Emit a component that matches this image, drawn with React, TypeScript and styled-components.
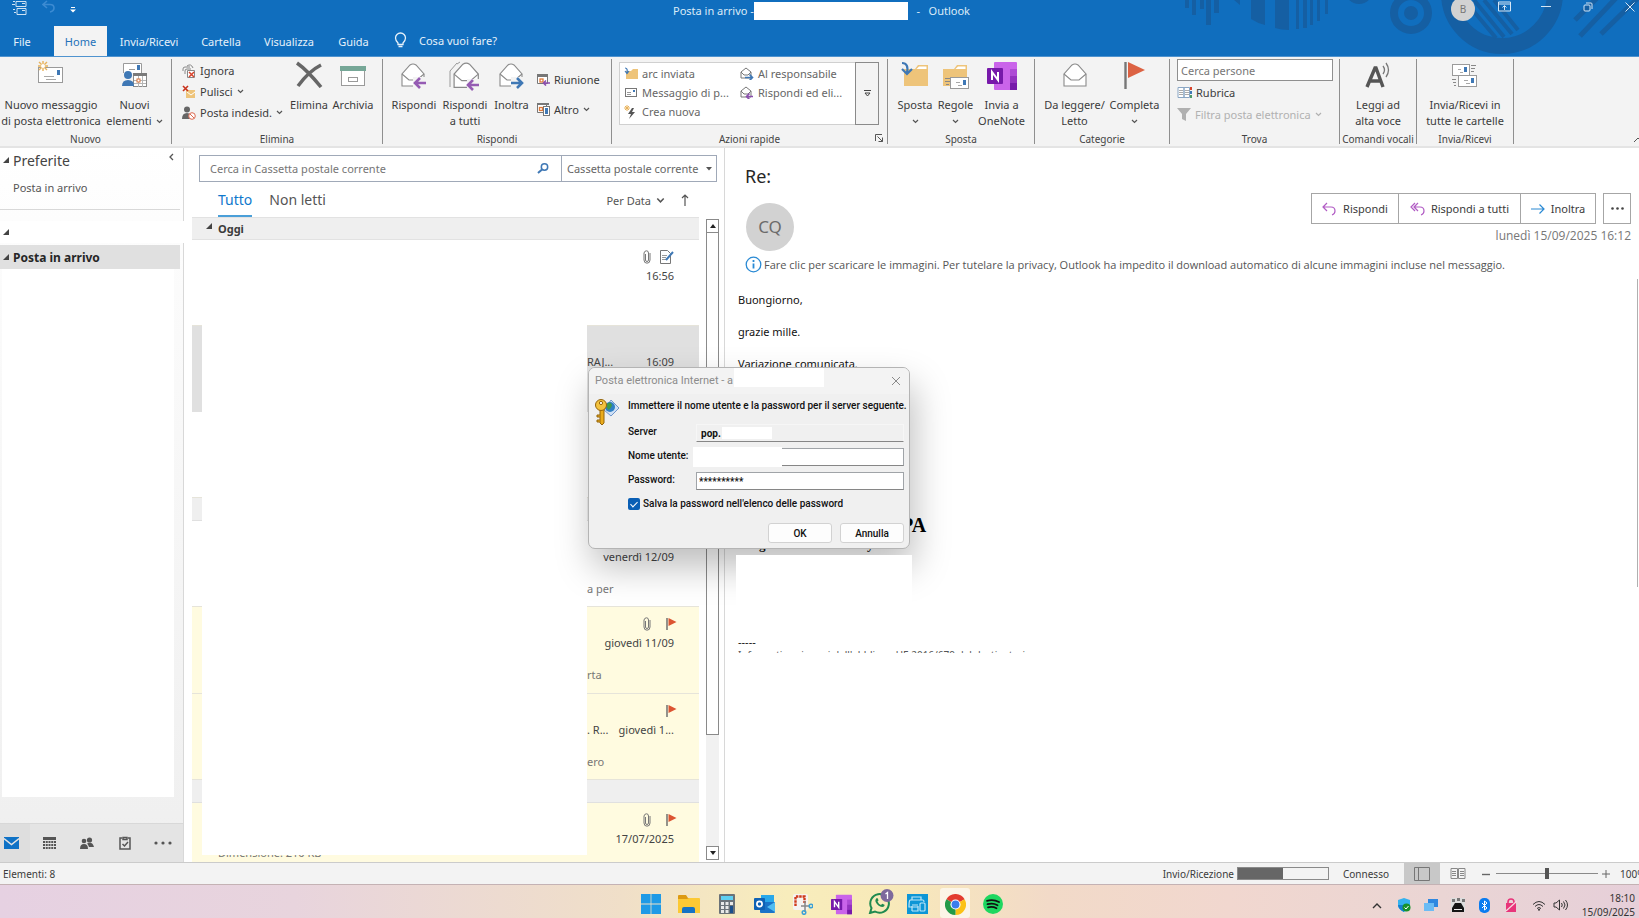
import React from "react";
import styled, { createGlobalStyle } from "styled-components";

const Global = createGlobalStyle`
  * { box-sizing: border-box; }
  body { margin: 0; overflow: hidden; background: #fff; }
  body, button, input, select { font-family: "Noto Sans", "Open Sans", sans-serif; font-size: 11px; color: #3b3b3b; }
  button { border: 0; background: none; padding: 0; white-space: nowrap; }
  h1, h2, p { margin: 0; font-weight: 400; }
  svg { display: block; flex: none; }
`;

const Shell = styled.div`
  position: relative;
  min-height: 100vh;
  display: flex;
  flex-direction: column;
  overflow: hidden;
  line-height: 16px;
`;

/* ---------- header ---------- */
const Header = styled.header`
  position: relative;
  background: #106ebe;
  height: 57px;
  border-bottom: 1px solid #4f93cf;
  overflow: hidden;
  display: flex;
  flex-direction: column;
  flex: none;
`;
const Pattern = styled.svg`
  position: absolute;
  top: 0;
  right: 0;
`;
const TitleBar = styled.div`
  position: relative;
  display: grid;
  grid-template-columns: 1fr auto 1fr;
  height: 27px;
`;
const Quick = styled.div`
  display: flex;
  gap: 14px;
  padding-left: 12px;
`;
const Title = styled.h1`
  display: flex;
  align-items: center;
  font-size: 11px;
  color: #dcebf8;
  height: 21px;
  padding-left: 4px;
  white-space: pre;
`;
const Redacted = styled.span<{ $w: number; $h: number }>`
  background: #fff;
  width: ${p => p.$w}px;
  height: ${p => p.$h}px;
  flex: none;
`;
const WindowTools = styled.div`
  display: flex;
  justify-content: flex-end;
  align-items: flex-start;
`;
const Account = styled.button`
  width: 24px;
  height: 24px;
  margin: -3px 8px 0 0;
  border-radius: 50%;
  background: #d2d2d2;
  color: #767676;
  font-size: 10px;
`;
const WinButton = styled.button`
  width: 42px;
  height: 13px;
  display: flex;
  align-items: center;
  justify-content: center;
  &:last-child { width: 30px; padding-left: 12px; }
`;
const Tabs = styled.nav`
  position: relative;
  display: flex;
  height: 30px;
`;
const Tab = styled.button<{ $w: number; $active?: boolean }>`
  width: ${p => p.$w}px;
  height: 30px;
  margin-left: ${p => (p.$active ? 10 : 0)}px;
  color: ${p => (p.$active ? "#2372ba" : "#e6f1fa")};
  background: ${p => (p.$active ? "#f3f3f3" : "transparent")};
`;
const Tell = styled.button`
  display: flex;
  align-items: center;
  gap: 12px;
  margin-left: 14px;
  height: 28px;
  color: #e6f1fa;
`;

/* ---------- ribbon ---------- */
const Ribbon = styled.div`
  display: flex;
  flex: none;
  height: 91px;
  background: #f3f3f3;
  border-bottom: 2px solid #e4e4e4;
  padding-top: 2px;
`;
const Group = styled.section<{ $w: number }>`
  position: relative;
  width: ${p => p.$w}px;
  flex: none;
  height: 85px;
  border-right: 1px solid #8f8f8f;
  display: flex;
  flex-direction: column;
`;
const GroupBody = styled.div<{ $pad?: number }>`
  display: flex;
  height: 73px;
  flex: none;
  padding-left: ${p => p.$pad ?? 0}px;
`;
const GroupTitle = styled.h2`
  font-size: 10px;
  line-height: 14px;
  text-align: center;
  color: #444;
  white-space: nowrap;
`;
const BigButton = styled.button<{ $w: number }>`
  width: ${p => p.$w}px;
  display: flex;
  flex-direction: column;
  align-items: center;
  line-height: 16px;
  flex: none;
`;
const BigIcon = styled.span`
  height: 38px;
  display: flex;
  align-items: flex-start;
  padding-top: 2px;
`;
const Line = styled.span`
  display: flex;
  align-items: center;
  gap: 4px;
  height: 16px;
  white-space: nowrap;
`;
const SmallColumn = styled.div<{ $w: number; $row: number; $top?: number; $left?: number }>`
  width: ${p => p.$w}px;
  padding-top: ${p => p.$top ?? 0}px;
  margin-left: ${p => p.$left ?? 0}px;
  display: grid;
  align-content: start;
  grid-auto-rows: ${p => p.$row}px;
  flex: none;
`;
const SmallButton = styled.button<{ $off?: boolean }>`
  display: flex;
  align-items: center;
  gap: 4px;
  color: ${p => (p.$off ? "#b1b1b1" : "#3b3b3b")};
`;
const Gallery = styled.div`
  display: flex;
  width: 260px;
  height: 63px;
  margin-top: 3px;
  background: #fff;
  border: 1px solid #d0d0d0;
`;
const GalleryItems = styled.div`
  flex: 1;
  display: grid;
  grid-template-columns: 116px 1fr;
  grid-auto-rows: 19px;
  align-content: start;
  padding: 1px 0 0 4px;
  button { color: #666; }
`;
const GalleryMore = styled.button`
  width: 24px;
  margin: -1px;
  border: 1px solid #8a8a8a;
  background: #f3f3f3;
  display: flex;
  align-items: center;
  justify-content: center;
`;
const Launcher = styled.button`
  position: absolute;
  right: 4px;
  bottom: 2px;
`;
const PeopleInput = styled.input`
  width: 156px;
  height: 22px;
  border: 1px solid #8f8f8f;
  background: #fff;
  padding: 0 3px;
  &::placeholder { color: #767676; opacity: 1; }
`;
const CollapseRibbon = styled.button`
  margin-left: auto;
  align-self: flex-end;
  width: 6px;
  height: 12px;
  overflow: hidden;
`;

/* ---------- main ---------- */
const Main = styled.main`
  flex: 1;
  display: flex;
  min-height: 0;
  background: #fff;
`;
const Nav = styled.aside`
  width: 184px;
  flex: none;
  display: flex;
  flex-direction: column;
  border-right: 1px solid #d8d8d8;
  background: linear-gradient(#fff, #fbfbfb 20%, #efefef);
`;
const NavRow = styled.button<{ $h: number; $size?: number; $selected?: boolean }>`
  height: ${p => p.$h}px;
  display: flex;
  align-items: center;
  gap: 4px;
  padding-left: 3px;
  width: 180px;
  font-size: ${p => p.$size ?? 11}px;
  font-weight: ${p => (p.$selected ? 700 : 400)};
  background: ${p => (p.$selected ? "#e0e0e0" : "transparent")};
  color: ${p => (p.$selected ? "#262626" : "#444")};
  svg:last-child:not(:first-child) { margin: -6px 6px 0 auto; }
`;
const NavChild = styled.a`
  height: 37px;
  padding: 8px 0 0 13px;
  color: #555;
  text-decoration: none;
`;
const NavDivider = styled.hr`
  width: 180px;
  height: 1px;
  border: 0;
  margin: 0 0 11px;
  background: #d8d8d8;
`;
const NavAccount = styled.div`
  background: #fff;
  margin: 0 -1px 2px 0;
  display: flex;
`;
const NavBlank = styled.div`
  background: #fff;
  margin: 0 9px 0 2px;
  flex: 1;
`;
const NavBar = styled.div`
  height: 39px;
  margin-top: 26px;
  border-top: 1px solid #d8d8d8;
  background: #e4e4e4;
  display: flex;
`;
const NavIcon = styled.button<{ $active?: boolean }>`
  width: 38px;
  display: flex;
  align-items: center;
  justify-content: center;
  background: ${p => (p.$active ? "#dedede" : "transparent")};
  &:first-child { width: 30px; padding-right: 7px; }
`;

const List = styled.section`
  width: 541px;
  flex: none;
  display: flex;
  flex-direction: column;
  border-right: 1px solid #d8d8d8;
  padding-left: 8px;
`;
const SearchRow = styled.div`
  display: flex;
  height: 27px;
  width: 518px;
  margin: 7px 0 0 7px;
  border: 1px solid #a0a9b8;
  flex: none;
`;
const SearchInput = styled.input`
  flex: 1;
  border: 0;
  padding: 0 10px;
  &::placeholder { color: #767676; opacity: 1; }
`;
const SearchButton = styled.button`
  width: 36px;
  display: flex;
  align-items: center;
  justify-content: center;
`;
const Scope = styled.div`
  position: relative;
  width: 155px;
  border-left: 1px solid #a0a9b8;
  display: flex;
  align-items: center;
  svg { position: absolute; right: 4px; pointer-events: none; }
`;
const ScopeSelect = styled.select`
  appearance: none;
  border: 0;
  background: none;
  width: 100%;
  padding: 0 0 0 5px;
  color: #666;
`;
const FilterRow = styled.div`
  display: flex;
  height: 35px;
  padding-left: 26px;
  flex: none;
`;
const Filter = styled.button<{ $active?: boolean }>`
  font-size: 14px;
  line-height: 31px;
  padding-top: 2px;
  margin-right: 17px;
  color: ${p => (p.$active ? "#0f78cc" : "#555")};
  border-bottom: 2px solid ${p => (p.$active ? "#4a9fd8" : "transparent")};
`;
const Sort = styled.button`
  display: flex;
  align-items: center;
  gap: 5px;
  margin: 2px 16px 0 auto;
  color: #555;
`;
const SortDir = styled.button`
  margin-right: 35px;
`;
const Scroller = styled.div`
  flex: 1;
  min-height: 0;
  display: flex;
`;
const Rows = styled.div`
  width: 507px;
  overflow: hidden;
`;
const DateHeader = styled.button`
  width: 100%;
  display: flex;
  align-items: center;
  gap: 6px;
  height: 23px;
  padding-left: 14px;
  background: #efefef;
  border-top: 1px solid #e2e2e2;
  border-bottom: 1px solid #e2e2e2;
  font-weight: 700;
  svg { margin-top: -5px; }
`;
const tones = { plain: "#fff", selected: "#e0e0e0", flagged: "#fffbe0", header: "#efefef" };
const Row = styled.article<{ $h: number; $tone: keyof typeof tones }>`
  display: flex;
  height: ${p => p.$h}px;
  padding-left: 10px;
  background: ${p => tones[p.$tone]};
  border-bottom: 1px solid ${p => (p.$tone === "plain" || p.$tone === "flagged" ? "#e6e4da" : "#e0e0e0")};
`;
const Cover = styled.div`
  width: 385px;
  margin-bottom: -1px;
  background: #fff;
  flex: none;
`;
const Meta = styled.div`
  flex: 1;
  min-width: 0;
  overflow: hidden;
  padding: 10px 25px 0 0;
  color: #444;
`;
const MetaIcons = styled.div<{ $flag?: boolean }>`
  display: flex;
  justify-content: flex-end;
  align-items: center;
  gap: ${p => (p.$flag ? 15 : 8)}px;
  height: 14px;
  margin: 0 ${p => (p.$flag ? -3 : 0)}px 4px 0;
`;
const MetaLine = styled.div`
  display: flex;
  justify-content: space-between;
  white-space: pre;
`;
const Preview = styled.div`
  color: #777;
  margin-top: 16px;
  white-space: nowrap;
`;
const LastRow = styled.article`
  display: flex;
  height: 59px;
  padding-left: 10px;
  background: ${tones.flagged};
`;
const LastCover = styled.div`
  width: 385px;
  flex: none;
  display: flex;
  flex-direction: column;
`;
const LastBlank = styled.div`
  height: 52px;
  background: #fff;
`;
const Cropped = styled.div`
  height: 4px;
  overflow: hidden;
  padding-left: 16px;
  color: #777;
  display: flex;
  align-items: flex-end;
  line-height: 12px;
`;
const Scrollbar = styled.div`
  width: 13px;
  margin: 2px 0 2px 7px;
  background: #f1f1f1;
  display: flex;
  flex-direction: column;
`;
const ScrollButton = styled.button`
  height: 14px;
  border: 1px solid #8a8a8a;
  background: #fff;
  display: flex;
  align-items: center;
  justify-content: center;
`;
const Thumb = styled.div`
  height: 502px;
  border: 1px solid #8a8a8a;
  border-top: 0;
  background: #fff;
  margin-bottom: auto;
`;

const Reading = styled.section`
  flex: 1;
  min-width: 0;
  display: flex;
  flex-direction: column;
`;
const Subject = styled.h2`
  font-size: 18px;
  line-height: 24px;
  margin: 16px 0 0 20px;
  color: #262626;
`;
const SenderRow = styled.div`
  display: flex;
  justify-content: space-between;
  height: 66px;
  padding: 5px 8px 0 21px;
`;
const Avatar = styled.div`
  width: 48px;
  height: 48px;
  margin-top: 10px;
  border-radius: 50%;
  background: #d2d2d2;
  color: #6b6b6b;
  font-size: 17px;
  display: flex;
  align-items: center;
  justify-content: center;
`;
const Actions = styled.div`
  display: flex;
  flex-direction: column;
  align-items: flex-end;
`;
const ActionRow = styled.div`
  display: flex;
  height: 31px;
  margin-bottom: 4px;
`;
const Sent = styled.time`
  font-family: "Open Sans", "Noto Sans", sans-serif;
  font-size: 12px;
  color: #777;
`;
const Action = styled.button<{ $w: number }>`
  width: ${p => p.$w}px;
  border: 1px solid #a6a6a6;
  margin-left: -1px;
  display: flex;
  align-items: center;
  justify-content: center;
  gap: 6px;
  &:last-child { margin-left: 7px; }
`;
const InfoBar = styled.button`
  font-family: "Open Sans", "Noto Sans", sans-serif;
  display: flex;
  align-items: center;
  gap: 2px;
  margin: 1px 0 0 20px;
  height: 18px;
  color: #555;
`;
const MailBody = styled.div`
  display: flex;
  flex: 1;
  margin-top: 6px;
`;
const Message = styled.div`
  flex: 1;
  padding: 13px 0 0 13px;
  color: #111;
`;
const Para = styled.p`
  margin-bottom: 16px;
`;
const Company = styled.p`
  font-family: "Liberation Serif", serif;
  font-weight: 700;
  font-size: 20px;
  line-height: 24px;
  color: #000;
  margin-top: 141px;
`;
const Address = styled.p`
  font-family: "Liberation Serif", serif;
  font-weight: 700;
  font-size: 13px;
  line-height: 16px;
`;
const Blank = styled.div`
  position: relative;
  z-index: 2;
  width: 176px;
  height: 79px;
  margin: 2px 0 0 -2px;
  background: #fff;
`;
const Footer = styled.p`
  height: 3px;
  overflow: hidden;
  font-size: 10px;
  line-height: 10px;
  color: #555;
`;
const ReadScroll = styled.div`
  width: 2px;
  border-left: 1px solid #b0b0b0;
  height: 308px;
`;

/* ---------- dialog ---------- */
const Dialog = styled.form`
  position: absolute;
  left: 588px;
  top: 367px;
  width: 322px;
  height: 182px;
  border: 1px solid #b4b4b4;
  border-radius: 7px;
  background: #f0f0f0;
  box-shadow: 4px 18px 36px rgba(0, 0, 0, 0.26);
  overflow: hidden;
  font-family: Roboto, sans-serif;
  font-size: 10px;
  font-weight: 500;
  color: #111;
  button, input { font-family: Roboto, sans-serif; font-weight: 500; font-size: 10px; color: #111; }
`;
const DialogTitle = styled.div`
  display: flex;
  height: 26px;
  padding-left: 6px;
  color: #8c8c8c;
  font-size: 11px;
  font-weight: 400;
  line-height: 25px;
  background: #f3f3f3;
  white-space: nowrap;
`;
const DialogName = styled.span`
  width: 139px;
  overflow: hidden;
`;
const DialogClose = styled.button`
  margin-left: auto;
  width: 18px;
  display: flex;
  align-items: center;
`;
const DialogBody = styled.div`
  display: grid;
  grid-template-columns: 34px minmax(0, 1fr);
  padding: 4px 5px 0 5px;
`;
const Fields = styled.div`
  display: flex;
  flex-direction: column;
`;
const Intro = styled.p`
  height: 25px;
  font-weight: 500;
  white-space: nowrap;
`;
const Field = styled.label`
  display: flex;
  height: 24px;
  line-height: 17px;
  white-space: nowrap;
`;
const Caption = styled.span`
  width: 68px;
  flex: none;
`;
const FieldBox = styled.span<{ $readonly?: boolean }>`
  flex: 1;
  min-width: 0;
  display: flex;
  align-items: center;
  height: 18px;
  margin-top: 1px;
  border: 1px solid ${p => (p.$readonly ? "#f6f6f6" : "#a0a4a8")};
  border-bottom-color: #868686;
  background: ${p => (p.$readonly ? "#f0f0f0" : "#fff")};
  input { border: 0; background: none; padding: 0 2px; height: 14px; min-width: 0; }
`;
const HostInput = styled.input`
  width: 23px;
  margin-left: 2px;
  && { font-weight: 700; padding-right: 0; }
`;
const UserCover = styled.span`
  width: 89px;
  height: 20px;
  margin-left: -4px;
  background: #fff;
  flex: none;
`;
const Remember = styled.label`
  display: flex;
  align-items: center;
  gap: 3px;
  height: 14px;
  margin-top: 2px;
`;
const Check = styled.input`
  appearance: none;
  width: 12px;
  height: 12px;
  margin: 0;
  border-radius: 2px;
  background: #0a5fb5;
  display: flex;
  justify-content: center;
  &::after {
    content: "";
    width: 3px;
    height: 6px;
    margin-top: 2px;
    border: solid #fff;
    border-width: 0 1px 1px 0;
    transform: rotate(45deg);
  }
`;
const DialogButtons = styled.div`
  display: flex;
  justify-content: flex-end;
  gap: 8px;
  margin-top: 12px;
  button {
    width: 64px;
    height: 20px;
    background: #fdfdfd;
    border: 1px solid #d2d2d2;
    border-radius: 3px;
  }
`;

/* ---------- status + taskbar ---------- */
const Status = styled.footer`
  flex: none;
  height: 22px;
  display: flex;
  align-items: center;
  padding-left: 3px;
  background: #f3f3f3;
  border-top: 1px solid #cbcbcb;
  font-size: 10px;
  overflow: hidden;
  white-space: nowrap;
`;
const StatusRight = styled.div`
  margin-left: auto;
  display: flex;
  align-items: center;
  height: 21px;
`;
const Progress = styled.progress`
  appearance: none;
  width: 92px;
  height: 13px;
  margin: 0 14px 0 3px;
  border: 1px solid #8a8a8a;
  &::-webkit-progress-bar { background: #f3f3f3; }
  &::-webkit-progress-value { background: #666; }
`;
const ViewButton = styled.button<{ $active?: boolean }>`
  width: 36px;
  height: 21px;
  display: flex;
  align-items: center;
  justify-content: center;
  background: ${p => (p.$active ? "#c8c8c8" : "transparent")};
`;
const Connected = styled.span`
  width: 61px;
`;
const ZoomRange = styled.input`
  appearance: none;
  width: 102px;
  height: 12px;
  margin: 0 4px;
  background: linear-gradient(#8a8a8a, #8a8a8a) center / 100% 1px no-repeat;
  &::-webkit-slider-thumb {
    appearance: none;
    width: 4px;
    height: 11px;
    background: #555;
  }
`;
const ZoomValue = styled.span`
  width: 19px;
  margin-left: 10px;
  overflow: hidden;
`;
const Taskbar = styled.footer`
  flex: none;
  height: 34px;
  display: grid;
  grid-template-columns: 1fr auto 1fr;
  border-top: 1px solid #c4b2b4;
  background: linear-gradient(90deg, #e6d1e2 0%, #e8d4dd 18%, #f0dfc8 38%, #f8edbc 48%, #f8eab9 54%, #f2dac8 64%, #f1d7cf 75%, #ead5d4 88%, #e6cfd9 100%);
`;
const Apps = styled.div`
  grid-column: 2;
  display: flex;
  padding: 3px 0 0 5px;
`;
const AppButton = styled.button<{ $active?: boolean }>`
  width: 30px;
  height: 30px;
  margin: 0 4px;
  padding-top: 6px;
  display: flex;
  justify-content: center;
  border-radius: 3px;
  background: ${p => (p.$active ? "rgba(255,255,255,.62)" : "transparent")};
`;
const BadgedIcon = styled.svg`
  margin: -5px -4px 0 0;
`;
const Tray = styled.div`
  display: flex;
  justify-content: flex-end;
  align-items: center;
  padding: 6px 4px 0 0;
`;
const TrayButton = styled.button<{ $w?: number }>`
  width: ${p => p.$w ?? 27}px;
  display: flex;
  justify-content: center;
`;
const Clock = styled.time`
  text-align: right;
  font-size: 10px;
  line-height: 14px;
  width: 67px;
  color: #333;
`;

/* ---------- icons ---------- */
const Ico: React.FC<{ w: number; h?: number; vb?: string; children: React.ReactNode }> = ({ w, h = w, vb, children }) => (
  <svg width={w} height={h} viewBox={vb ?? `0 0 ${w} ${h}`} fill="none" aria-hidden="true">{children}</svg>
);
const Chev = ({ c = "#555", w = 7 }: { c?: string; w?: number }) => (
  <Ico w={w} h={w - 2} vb="0 0 7 5"><path d="M1 1l2.5 2.5L6 1" stroke={c} strokeWidth="1.2" /></Ico>
);
const Tri = () => <Ico w={6} h={6}><path d="M6 0v6H0z" fill="#444" /></Ico>;
const Card = ({ x, y, w = 24, h = 15 }: { x: number; y: number; w?: number; h?: number }) => (
  <g>
    <rect x={x + 0.5} y={y + 0.5} width={w} height={h} fill="#fff" stroke="#9a9a9a" />
    <rect x={x + w - 5} y={y + 3} width="3" height="5" fill="#3f78b5" />
    <path d={`M${x + 6} ${y + h - 5.5}h${w - 14}M${x + 8} ${y + h - 2.5}h${w - 14}`} stroke="#a8a8a8" />
  </g>
);
const OpenMail = ({ x = 0 }: { x?: number }) => (
  <g stroke="#8a8a8a" strokeWidth="1.1" fill="#fff">
    <path d={`M${x + 1} 23V11L${x + 9} 2q3-2 6 0l8 9v12z`} />
    <path d={`M${x + 1} 11l7 6h8l7-6`} />
  </g>
);
const ArrowL = ({ x, y, c = "#955bb3" }: { x: number; y: number; c?: string }) => (
  <path d={`M${x + 13} ${y + 5}H${x + 2}M${x + 7} ${y}l-5 5 5 5`} stroke={c} strokeWidth="2.6" />
);
const Paperclip = () => (
  <Ico w={8} h={14}><path d="M2.5 4v6q0 1.5 1.5 1.5T5.500 10V3Q5.500 .8 3.500 .8T1 3v7q0 3.200 3 3.200T7 10V3" stroke="#777" /></Ico>
);
const Flag = () => (
  <Ico w={11} h={14}><path d="M1 1v12" stroke="#666" strokeWidth="1.4" /><path d="M2.500 1l8 4-8 4z" fill="#dc5432" /></Ico>
);
const Folder = ({ s = 1 }: { s?: number }) => (
  <g transform={`scale(${s})`}>
    <path d="M3 25V8h11l3-4h10v21z" fill="#eec47a" /><path d="M15.500 8l2.500-2.500h7.500V8z" fill="#fff" />
  </g>
);
const OneNote = ({ s }: { s: number }) => (
  <Ico w={s} vb="0 0 30 30">
    <rect x="7" y="1" width="23" height="28" rx="1" fill="#ca64ea" />
    <path d="M23 8h7v7h-7z" fill="#ae4bd5" /><path d="M23 15h7v7h-7z" fill="#9332bf" /><path d="M23 22h7v7h-7z" fill="#7719aa" />
    <rect x="0" y="7" width="16" height="16" rx="1" fill="#7719aa" />
    <path d="M5 19v-8l6 8v-8" stroke="#fff" strokeWidth="2" />
  </Ico>
);
const MiniMail = ({ right }: { right?: boolean }) => (
  <Ico w={14} h={13}>
    <path d="M1 11V5l5-4 5 4v6zM1 5l3 3h4l3-3" stroke="#777" fill="#fff" />
    {right
      ? <path d="M5 10.500h7M9.500 7.500l3 3-3 3" stroke="#3f78b5" strokeWidth="1.600" />
      : <path d="M13 10.500H7M9.500 7.500l-3 3 3 3" stroke="#8b4fae" strokeWidth="1.600" />}
  </Ico>
);

const HeaderPattern = () => (
  <Pattern width="460" height="57" viewBox="1179 0 460 57" fill="none" aria-hidden="true">
    <g fill="#155fa3">
      <path d="M1185 0h4v8h-4zM1192 0h4v15h-4zM1200 0h4v9h-4zM1206 0h5v25h-5zM1214 0h5v13h-5zM1234 0h6v5z" />
      <path d="M1251 0h14v25q-8-2-14-6zM1275 0h14v30q-8 0-14-2zM1296 0h3v29h-3zM1303 0h4v28h-4zM1310 0h3v25h-3zM1317 0h3v21h-3zM1325 0h3v14h-3z" />
      <circle cx="1359" cy="-10" r="14" />
      <circle cx="1411" cy="13" r="7" />
    </g>
    <g stroke="#155fa3">
      <circle cx="1411" cy="13" r="17" strokeWidth="8" />
      <circle cx="1502" cy="-7" r="53" strokeWidth="16" />
      <path d="M1466 2l30 36M1474 0l30 37M1484 0l28 34M1494 0l24 30" strokeWidth="4" />
      <path d="M1601 -6l-26 26M1618 -4l-38 40M1642 -6l-41 40" strokeWidth="5" />
    </g>
  </Pattern>
);

const App = () => (
  <Shell>
    <Global />
    <Header>
      <HeaderPattern />
      <TitleBar>
        <Quick>
          <Ico w={16} h={16}>
            <path d="M4 1.500h10v5H4zM5 8.500h9v6H5zM10 3.500h3M10 10.500h3M1 1.500h2M0 4.500h3M1 9.500h2M2 12.500h2" stroke="#cfe2f3" />
          </Ico>
          <Ico w={14} h={14}><path d="M5 1L1 4.500 5 8M1 4.500h7q4 0 4 3.500 0 3-4 4" stroke="#3c8bd2" strokeWidth="1.600" /></Ico>
          <Ico w={6} h={14}><path d="M1 7.500h4" stroke="#fff" /><path d="M0 9.500h6l-3 3z" fill="#fff" /></Ico>
        </Quick>
        <Title>Posta in arrivo -<Redacted $w={154} $h={18} />{"   -   Outlook"}</Title>
        <WindowTools>
          <Account>B</Account>
          <WinButton aria-label="Opzioni barra multifunzione"><Ico w={13} h={11}><path d="M.5 1v9h12V1zM.5 3h12M6.500 9V5M4.500 6.500l2-2 2 2" stroke="#d5e6f5" /></Ico></WinButton>
          <WinButton aria-label="Riduci a icona"><Ico w={10} h={10}><path d="M0 4.500h10" stroke="#d5e6f5" /></Ico></WinButton>
          <WinButton aria-label="Ripristina"><Ico w={10} h={10}><rect x="1" y="3" width="6" height="6" rx="1" stroke="#d5e6f5" /><path d="M3 1h5q1 0 1 1v5" stroke="#d5e6f5" /></Ico></WinButton>
          <WinButton aria-label="Chiudi"><Ico w={10} h={10}><path d="M.5 .5l9 9M9.500 .5l-9 9" stroke="#d5e6f5" /></Ico></WinButton>
        </WindowTools>
      </TitleBar>
      <Tabs>
        <Tab $w={44}>File</Tab>
        <Tab $w={53} $active>Home</Tab>
        <Tab $w={84}>Invia/Ricevi</Tab>
        <Tab $w={60}>Cartella</Tab>
        <Tab $w={76}>Visualizza</Tab>
        <Tab $w={53}>Guida</Tab>
        <Tell>
          <Ico w={13} h={16}><path d="M4 11Q1.500 8.500 1.500 6a5 5 0 0 1 10 0q0 2.500-2.500 5v1.500H4zM4.500 14.500h4" stroke="#e6f1fa" strokeWidth="1.300" /></Ico>
          Cosa vuoi fare?
        </Tell>
      </Tabs>
    </Header>

    <Ribbon>
      <Group $w={172}>
        <GroupBody>
          <BigButton $w={102}>
            <BigIcon><Ico w={26} h={24}>
              <Card x={0} y={6} w={24} h={15} />
              <path d="M5 0v10M0 5h10M1 1l8 8M9 1L1 9" stroke="#e8b25a" strokeWidth="1.400" /><circle cx="5" cy="5" r="2" fill="#fff" />
            </Ico></BigIcon>
            <Line>Nuovo messaggio</Line><Line>di posta elettronica</Line>
          </BigButton>
          <BigButton $w={65}>
            <BigIcon><Ico w={26} h={27}>
              <path d="M1.500 12V2.500h18V12" fill="#fff" stroke="#9a9a9a" /><rect x="15" y="4" width="3" height="5" fill="#3f78b5" /><path d="M7 8.500h6" stroke="#9a9a9a" />
              <rect x="11.500" y="13.500" width="13" height="12" fill="#fff" stroke="#8a8a8a" /><path d="M11 12h14v3H11z" fill="#7a7a7a" /><path d="M12 19.500h12M12 22.500h12M16.500 15v11M20.500 15v11" stroke="#b5b5b5" />
              <rect x="15" y="18" width="3" height="3" stroke="#d8733a" fill="#fff" />
              <circle cx="6" cy="14" r="4" fill="#3f78b5" /><path d="M0 25q0-6 6-6t6 6z" fill="#3f78b5" />
            </Ico></BigIcon>
            <Line>Nuovi</Line><Line>elementi <Chev /></Line>
          </BigButton>
        </GroupBody>
        <GroupTitle>Nuovo</GroupTitle>
      </Group>

      <Group $w={211}>
        <GroupBody $pad={10}>
          <SmallColumn $w={106} $row={21} $top={1}>
            <SmallButton><Ico w={14} h={14}>
              <path d="M1 7V5q0-2 2-2h5M3 10V7q0-2 2-2h4M5 2q4-3 6 2" stroke="#888" /><path d="M5.500 6.500h7v7h-7z" fill="#fff" stroke="#888" /><path d="M7 8l5 5M12 8l-5 5" stroke="#d8442c" strokeWidth="1.500" />
            </Ico>Ignora</SmallButton>
            <SmallButton><Ico w={14} h={14}>
              <path d="M4 5h9v8H4z" fill="#eec47a" /><path d="M5 7l4 3 4-3" stroke="#fff" /><path d="M1 1l5 5M6 1L1 6" stroke="#c8321c" strokeWidth="1.600" />
            </Ico>Pulisci <Chev /></SmallButton>
            <SmallButton><Ico w={14} h={14}>
              <circle cx="5" cy="3.500" r="3" fill="#666" /><path d="M0 13q0-6 5-6t4 6z" fill="#666" /><circle cx="10" cy="10" r="3.300" fill="#fff" stroke="#dc6a52" /><path d="M8 8l4 4" stroke="#dc6a52" />
            </Ico>Posta indesid. <Chev /></SmallButton>
          </SmallColumn>
          <BigButton $w={42}>
            <BigIcon><Ico w={28} h={27}><path d="M2 2q10 7 24 24M26 4Q14 10 3 25" stroke="#666" strokeWidth="3.500" /></Ico></BigIcon>
            <Line>Elimina</Line>
          </BigButton>
          <BigButton $w={46}>
            <BigIcon><Ico w={28} h={27}><rect x="2.500" y="9.500" width="23" height="15" fill="#fff" stroke="#9a9a9a" /><path d="M1 5h26v5H1z" fill="#76a797" /><rect x="9.500" y="16.500" width="9" height="4" stroke="#9a9a9a" /></Ico></BigIcon>
            <Line>Archivia</Line>
          </BigButton>
        </GroupBody>
        <GroupTitle>Elimina</GroupTitle>
      </Group>

      <Group $w={229}>
        <GroupBody $pad={6}>
          <BigButton $w={50}>
            <BigIcon><Ico w={26} h={28}><g transform="translate(0 2)"><OpenMail /></g><path d="M12 16h14v12H12z" fill="#f3f3f3" /><ArrowL x={12} y={17} /></Ico></BigIcon>
            <Line>Rispondi</Line>
          </BigButton>
          <BigButton $w={52}>
            <BigIcon><Ico w={32} h={30}>
              <path d="M1 26V10L8 2M8 3l3-2" stroke="#9a9a9a" /><g transform="translate(4 1) scale(1.1)"><OpenMail /></g><path d="M18 18h14v12H18z" fill="#f3f3f3" /><ArrowL x={17} y={19} />
            </Ico></BigIcon>
            <Line>Rispondi</Line><Line>a tutti</Line>
          </BigButton>
          <BigButton $w={41}>
            <BigIcon><Ico w={26} h={28}><g transform="translate(0 2)"><OpenMail /></g><path d="M12 16h14v12H12z" fill="#f3f3f3" /><path d="M12 22h11M18 17l5 5-5 5" stroke="#3f78b5" strokeWidth="2.600" /></Ico></BigIcon>
            <Line>Inoltra</Line>
          </BigButton>
          <SmallColumn $w={70} $row={30} $top={5} $left={4}>
            <SmallButton><Ico w={14} h={13}>
              <path d="M1.500 1.500h10v9h-10z" fill="#fff" stroke="#777" /><path d="M1 1h11v3H1z" fill="#777" /><rect x="4" y="6" width="3" height="3" stroke="#e07a3a" strokeWidth="1.300" /><path d="M14 10H8M10 7.500L7.500 10l2.500 2.500" stroke="#8b4fae" strokeWidth="1.600" />
            </Ico>Riunione</SmallButton>
            <SmallButton><Ico w={14} h={14}>
              <path d="M1.500 1.500h9v9h-9z" fill="#fff" stroke="#777" /><path d="M1 1h12v2H1z" fill="#777" /><rect x="3.500" y="5.500" width="3" height="3" stroke="#e07a3a" strokeWidth="1.300" /><rect x="7.500" y="4.500" width="6" height="9" fill="#fff" stroke="#777" /><path d="M9 6h3v6H9z" fill="#3f78b5" />
            </Ico>Altro <Chev /></SmallButton>
          </SmallColumn>
        </GroupBody>
        <GroupTitle>Rispondi</GroupTitle>
      </Group>

      <Group $w={276}>
        <GroupBody $pad={7}>
          <Gallery>
            <GalleryItems>
              <SmallButton><Ico w={14} h={14}><path d="M2 12V4h5l2-2h5v10z" fill="#eec47a" /><path d="M1 1q3 0 2 5M1 4l2 2.500L5 4" stroke="#3f78b5" strokeWidth="1.200" /></Ico>arc inviata</SmallButton>
              <SmallButton><MiniMail right />Al responsabile</SmallButton>
              <SmallButton><Ico w={14} h={12}><rect x="1.500" y="1.500" width="11" height="8" fill="#fff" stroke="#777" /><path d="M9 3h2v2H9z" fill="#3f78b5" /><path d="M3 5.500h4M3 7.500h4" stroke="#999" /></Ico>Messaggio di p...</SmallButton>
              <SmallButton><MiniMail />Rispondi ed eli...</SmallButton>
              <SmallButton><Ico w={14} h={14}><path d="M3 0v6M0 3h6M1 1l4 4M5 1L1 5" stroke="#e8b25a" /><path d="M8 3L4 9h3l-2 5 6-7H8l2-4z" fill="#555" /></Ico>Crea nuova</SmallButton>
            </GalleryItems>
            <GalleryMore aria-label="Altro"><Ico w={7} h={7}><path d="M0 .5h7" stroke="#444" /><path d="M1 3h5L3.500 6z" stroke="#444" /></Ico></GalleryMore>
          </Gallery>
        </GroupBody>
        <GroupTitle>Azioni rapide</GroupTitle>
        <Launcher aria-label="Gestisci azioni rapide"><Ico w={8} h={8}><path d="M.5 7V.5H7M2.500 2.500l5 5M7.500 3.500v4h-4" stroke="#555" /></Ico></Launcher>
      </Group>

      <Group $w={147}>
        <GroupBody $pad={7}>
          <BigButton $w={40}>
            <BigIcon><Ico w={28} h={27}><Folder /><path d="M1 2q7 0 5 10M1 8l5 5 5-5" stroke="#3f78b5" strokeWidth="2.200" /></Ico></BigIcon>
            <Line>Sposta</Line><Line><Chev /></Line>
          </BigButton>
          <BigButton $w={41}>
            <BigIcon><Ico w={28} h={30}><g transform="translate(-2)"><Folder /></g><path d="M3 17.500h5M3 20.500h5M4 23.500h3" stroke="#888" /><Card x={8} y={16} w={18} h={11} /></Ico></BigIcon>
            <Line>Regole</Line><Line><Chev /></Line>
          </BigButton>
          <BigButton $w={51}>
            <BigIcon><OneNote s={30} /></BigIcon>
            <Line>Invia a</Line><Line>OneNote</Line>
          </BigButton>
        </GroupBody>
        <GroupTitle>Sposta</GroupTitle>
      </Group>

      <Group $w={135}>
        <GroupBody $pad={8}>
          <BigButton $w={63}>
            <BigIcon><Ico w={24} h={28}><g transform="translate(0 2)"><OpenMail /></g></Ico></BigIcon>
            <Line>Da leggere/</Line><Line>Letto</Line>
          </BigButton>
          <BigButton $w={57}>
            <BigIcon><Ico w={22} h={28}><path d="M1.500 1v27" stroke="#777" strokeWidth="2.400" /><path d="M4 1l17 8-17 8z" fill="#dc6243" /></Ico></BigIcon>
            <Line>Completa</Line><Line><Chev /></Line>
          </BigButton>
        </GroupBody>
        <GroupTitle>Categorie</GroupTitle>
      </Group>

      <Group $w={170}>
        <GroupBody $pad={7}>
          <SmallColumn $w={156} $row={22}>
            <PeopleInput aria-label="Cerca persone" placeholder="Cerca persone" />
            <SmallButton><Ico w={15} h={13}><path d="M1 1.500h6v10H1zM7 1.500h5.500v10H7z" fill="#fff" stroke="#8aa6c4" /><path d="M2 4.500h4M2 6.500h4M2 8.500h4M8 4.500h4M8 6.500h4M8 8.500h4" stroke="#aaa" /><path d="M13 1h2v3h-2z" fill="#d8442c" /><path d="M13 5h2v3h-2z" fill="#3f78b5" /><path d="M13 9h2v3h-2z" fill="#4f9a6a" /></Ico>Rubrica</SmallButton>
            <SmallButton $off><Ico w={14} h={13}><path d="M0 0h14L9 6v7l-4-2V6z" fill="#b0b0b0" /></Ico>Filtra posta elettronica <Chev c="#b1b1b1" /></SmallButton>
          </SmallColumn>
        </GroupBody>
        <GroupTitle>Trova</GroupTitle>
      </Group>

      <Group $w={77}>
        <GroupBody>
          <BigButton $w={76}>
            <BigIcon><Ico w={26} h={28}><path d="M2 26l8-19h1l7 19M5 20h10" stroke="#555" strokeWidth="3.400" /><path d="M18 5q3 4 0 8M21 2q5 7 0 14" stroke="#777" strokeWidth="1.300" /></Ico></BigIcon>
            <Line>Leggi ad</Line><Line>alta voce</Line>
          </BigButton>
        </GroupBody>
        <GroupTitle>Comandi vocali</GroupTitle>
      </Group>

      <Group $w={97}>
        <GroupBody>
          <BigButton $w={96}>
            <BigIcon><Ico w={26} h={28}><Card x={0} y={3} w={17} h={11} /><Card x={6} y={14} w={18} h={11} /><path d="M19 4.500h5M19 7.500h4M19 10.500h3M0 18.500h4M1 21.500h3M2 24.500h2" stroke="#888" /></Ico></BigIcon>
            <Line>Invia/Ricevi in</Line><Line>tutte le cartelle</Line>
          </BigButton>
        </GroupBody>
        <GroupTitle>Invia/Ricevi</GroupTitle>
      </Group>
      <CollapseRibbon aria-label="Comprimi"><Ico w={10} h={8}><path d="M1 6l4-4 4 4" stroke="#555" /></Ico></CollapseRibbon>
    </Ribbon>

    <Main>
      <Nav>
        <NavRow $h={24} $size={14}><Tri />Preferite<Ico w={5} h={8}><path d="M4 1L1 4l3 3" stroke="#555" strokeWidth="1.300" /></Ico></NavRow>
        <NavChild href="#">Posta in arrivo</NavChild>
        <NavDivider />
        <NavAccount><NavRow $h={22} aria-label="Account"><Tri /></NavRow></NavAccount>
        <NavRow $h={24} $size={12} $selected><Tri />Posta in arrivo</NavRow>
        <NavBlank />
        <NavBar>
          <NavIcon $active aria-label="Posta"><Ico w={15} h={12}><path d="M0 0h15v12H0z" fill="#0f72c6" /><path d="M0 1.500l7.500 6 7.500-6" stroke="#e4e4e4" strokeWidth="1.400" /></Ico></NavIcon>
          <NavIcon aria-label="Calendario"><Ico w={13} h={12}><path d="M0 0h13v3H0z" fill="#555" /><path d="M0 5h13M0 8h13M0 11h13" stroke="#555" strokeWidth="1.800" strokeDasharray="2 .75" /></Ico></NavIcon>
          <NavIcon aria-label="Persone"><Ico w={14} h={12}><g fill="#555"><circle cx="4" cy="4" r="2.300" /><path d="M0 12q0-5 4-5t4 5z" /><circle cx="9.500" cy="3" r="2.600" /><path d="M9 10q-1-3-2-3.500 5.500-2.500 7 3.500z" /></g></Ico></NavIcon>
          <NavIcon aria-label="Attività"><Ico w={12} h={14}><path d="M3 2H1v11h10V2H9M4 1.500h4v2H4zM3.500 8l2 2 3.500-4" stroke="#555" strokeWidth="1.500" /></Ico></NavIcon>
          <NavIcon aria-label="Altro"><Ico w={18} h={4}><g fill="#555"><circle cx="2" cy="2" r="1.600" /><circle cx="9" cy="2" r="1.600" /><circle cx="16" cy="2" r="1.600" /></g></Ico></NavIcon>
        </NavBar>
      </Nav>

      <List>
        <SearchRow>
          <SearchInput aria-label="Cerca" placeholder="Cerca in Cassetta postale corrente" />
          <SearchButton aria-label="Avvia ricerca"><Ico w={12} h={11}><circle cx="7.500" cy="4" r="3.200" stroke="#3f78b5" strokeWidth="1.500" /><path d="M5 6.500L1 10" stroke="#3f78b5" strokeWidth="2" /></Ico></SearchButton>
          <Scope>
            <ScopeSelect aria-label="Ambito"><option>Cassetta postale corrente</option></ScopeSelect>
            <Ico w={6} h={4}><path d="M0 0h6L3 3.500z" fill="#555" /></Ico>
          </Scope>
        </SearchRow>
        <FilterRow>
          <Filter $active>Tutto</Filter>
          <Filter>Non letti</Filter>
          <Sort>Per Data <Chev w={9} /></Sort>
          <SortDir aria-label="Inverti ordine"><Ico w={8} h={12}><path d="M4 12V1M1 4l3-3 3 3" stroke="#555" strokeWidth="1.200" /></Ico></SortDir>
        </FilterRow>
        <Scroller>
          <Rows>
            <DateHeader><Tri />Oggi</DateHeader>
            <Row $h={86} $tone="plain"><Cover /><Meta>
              <MetaIcons><Paperclip /><Ico w={15} h={14}><path d="M1.500 .5h7l3 3v10h-10z" fill="#fff" stroke="#777" /><path d="M3 5.500h5M3 7.500h4M3 9.500h5" stroke="#999" /><path d="M14 2L7 10" stroke="#3f78b5" strokeWidth="2" /></Ico></MetaIcons>
              <MetaLine><span /><span>16:56</span></MetaLine>
            </Meta></Row>
            <Row $h={86} $tone="selected"><Cover /><Meta><MetaIcons /><MetaLine><span>RAJ...</span><span>16:09</span></MetaLine></Meta></Row>
            <Row $h={86} $tone="plain"><Cover /><Meta /></Row>
            <Row $h={23} $tone="header"><Cover /></Row>
            <Row $h={86} $tone="plain"><Cover /><Meta><MetaIcons /><MetaLine><span /><span>venerdì 12/09</span></MetaLine><Preview>a per</Preview></Meta></Row>
            <Row $h={87} $tone="flagged"><Cover /><Meta><MetaIcons $flag><Paperclip /><Flag /></MetaIcons><MetaLine><span /><span>giovedì 11/09</span></MetaLine><Preview>rta</Preview></Meta></Row>
            <Row $h={86} $tone="flagged"><Cover /><Meta><MetaIcons $flag><Flag /></MetaIcons><MetaLine><span>. R...</span><span>giovedì 1...</span></MetaLine><Preview>ero</Preview></Meta></Row>
            <Row $h={23} $tone="header"><Cover /></Row>
            <LastRow>
              <LastCover><LastBlank /><Cropped>Dimensione: 210 KB</Cropped></LastCover>
              <Meta><MetaIcons $flag><Paperclip /><Flag /></MetaIcons><MetaLine><span /><span>17/07/2025</span></MetaLine></Meta>
            </LastRow>
          </Rows>
          <Scrollbar>
            <ScrollButton aria-label="Su"><Ico w={6} h={4}><path d="M0 4h6L3 0z" fill="#222" /></Ico></ScrollButton>
            <Thumb />
            <ScrollButton aria-label="Giù"><Ico w={6} h={4}><path d="M0 0h6L3 4z" fill="#222" /></Ico></ScrollButton>
          </Scrollbar>
        </Scroller>
      </List>

      <Reading>
        <Subject>Re:</Subject>
        <SenderRow>
          <Avatar>CQ</Avatar>
          <Actions>
            <ActionRow>
              <Action $w={88}><Ico w={15} h={14}><path d="M5 1L1 5l4 4M1 5h8q4 0 4 4 0 3-3 4" stroke="#b15cc4" strokeWidth="1.200" /></Ico>Rispondi</Action>
              <Action $w={123}><Ico w={15} h={14}><path d="M5 1L1 5l4 4M8 1L4 5l4 4M4 5h6q4 0 4 4 0 3-3 4" stroke="#b15cc4" strokeWidth="1.200" /></Ico>Rispondi a tutti</Action>
              <Action $w={76}><Ico w={14} h={12}><path d="M0 6h13M8.500 1.500L13 6l-4.500 4.500" stroke="#2a8ad4" strokeWidth="1.200" /></Ico>Inoltra</Action>
              <Action $w={28} aria-label="Altre azioni"><Ico w={13} h={3}><g fill="#444"><circle cx="1.500" cy="1.500" r="1.300" /><circle cx="6.500" cy="1.500" r="1.300" /><circle cx="11.500" cy="1.500" r="1.300" /></g></Ico></Action>
            </ActionRow>
            <Sent>lunedì 15/09/2025 16:12</Sent>
          </Actions>
        </SenderRow>
        <InfoBar><Ico w={17} h={17}><circle cx="8.500" cy="8.500" r="7.300" stroke="#2a8ad4" strokeWidth="1.300" /><path d="M8.500 7.500v5M8.500 4v2" stroke="#2a8ad4" strokeWidth="1.800" /></Ico>Fare clic per scaricare le immagini. Per tutelare la privacy, Outlook ha impedito il download automatico di alcune immagini incluse nel messaggio.</InfoBar>
        <MailBody>
          <Message>
            <Para>Buongiorno,</Para>
            <Para>grazie mille.</Para>
            <Para>Variazione comunicata.</Para>
            <Company>CENTRO AUTO SPA</Company>
            <Address>Largo Chiara di Husenyi. 30</Address>
            <Blank />
            <p>-----</p>
            <Footer>Informativa ai sensi dell'obbligo - UE 2016/679 del destinatario</Footer>
          </Message>
          <ReadScroll />
        </MailBody>
      </Reading>
    </Main>

    <Status>
      Elementi: 8
      <StatusRight>
        Invio/Ricezione
        <Progress value={50} max={100} aria-label="Avanzamento" />
        <Connected>Connesso</Connected>
        <ViewButton $active aria-label="Normale"><Ico w={16} h={14}><path d="M.5 .5h15v13H.5zM4.500 .5v13" stroke="#777" /></Ico></ViewButton>
        <ViewButton aria-label="Lettura"><Ico w={16} h={13}><path d="M1 1.500h6.500v10H1zM8.500 1.500H15v10H8.500zM2 4.500h4M2 6.500h4M2 8.500h4M10 4.500h4M10 6.500h4M10 8.500h4" stroke="#888" /></Ico></ViewButton>
        <Ico w={16} h={8}><path d="M6 4.500h8" stroke="#666" strokeWidth="1.400" /></Ico>
        <ZoomRange type="range" defaultValue={50} aria-label="Zoom" />
        <Ico w={8} h={8}><path d="M0 4h8M4 0v8" stroke="#666" /></Ico>
        <ZoomValue>100%</ZoomValue>
      </StatusRight>
    </Status>

    <Taskbar>
      <Apps>
        <AppButton aria-label="Start"><Ico w={20}><path d="M0 0h9.600v9.600H0zM10.400 0H20v9.600h-9.600zM0 10.400h9.600V20H0zM10.400 10.400H20V20h-9.600z" fill="#1f9ae6" /></Ico></AppButton>
        <AppButton aria-label="Esplora file"><Ico w={22} h={20}><path d="M0 2q0-1 1-1h7l2 3h11v8H0z" fill="#dd9a12" /><path d="M0 5h9l2-1h10q1 0 1 1v14H0z" fill="#fcc934" /><path d="M4 19v-4q0-2 2-2h9q2 0 2 2v4z" fill="#1573c4" /></Ico></AppButton>
        <AppButton aria-label="Calcolatrice"><Ico w={16} h={20}><rect width="16" height="20" rx="1" fill="#6b7278" /><path d="M2 2h12v4H2z" fill="#5fd0f2" /><path d="M2 8h3v3H2zM6.500 8h3v3h-3zM11 8h3v3h-3zM2 12h3v3H2zM6.500 12h3v3h-3zM2 16h3v3H2zM6.500 16h3v3h-3z" fill="#e8e8e8" /><path d="M11 12h3v7h-3z" fill="#1a4f8c" /></Ico></AppButton>
        <AppButton aria-label="Outlook"><Ico w={22} h={20}><path d="M7 1h13v10H7z" fill="#28a8ea" /><path d="M6 8l15 0v10q0 1-1 1H7q-1 0-1-1z" fill="#1a74c8" /><path d="M21 8v10l-8-5z" fill="#50bdf2" /><rect y="4" width="11" height="12" rx="1" fill="#0f62b5" /><circle cx="5.500" cy="10" r="2.600" stroke="#fff" strokeWidth="1.700" /></Ico></AppButton>
        <AppButton aria-label="Strumento di cattura"><Ico w={20} h={21}><rect width="15" height="16" rx="2" fill="#f5f3f2" /><path d="M2.500 12V2.500h9V9" stroke="#cf3a1c" strokeWidth="2.400" strokeDasharray="2.500 .8" /><path d="M8 12h9M12 7v11" stroke="#888" strokeWidth="1.500" /><circle cx="18" cy="12" r="1.800" stroke="#3aa0d8" strokeWidth="1.500" /><circle cx="11" cy="18.500" r="1.800" stroke="#3aa0d8" strokeWidth="1.500" /></Ico></AppButton>
        <AppButton aria-label="OneNote"><OneNote s={21} /></AppButton>
        <AppButton aria-label="WhatsApp"><BadgedIcon width="26" height="25" viewBox="0 0 26 25" fill="none"><path d="M2 24l1.500-5a9.300 9.300 0 1 1 3.500 3.500z" stroke="#1f8a4f" strokeWidth="2" /><path d="M8 10q1-2 2 0l.5 1.500-1 1q1 2.500 3.500 3.500l1.200-1.200 2.300 1q.5 1-1 2-5 1-8-5-.5-2 .5-2.800z" fill="#1f8a4f" /><circle cx="19" cy="6.500" r="6.500" fill="#7e6a9c" /><path d="M17.500 5l2-1.500V10" stroke="#fff" strokeWidth="1.300" /></BadgedIcon></AppButton>
        <AppButton aria-label="Stampante"><Ico w={21} h={20}><rect width="21" height="20" fill="#0d96d6" /><path d="M5 6V3h9v3M3 6h13q1 0 1 2M3 6q-1 1-1 7h9M5 11h6M5 17h6v-5M5 17v-5" stroke="#bfe6f7" strokeWidth="1.200" /><rect x="13" y="9" width="5" height="8" rx="1" stroke="#bfe6f7" strokeWidth="1.200" /></Ico></AppButton>
        <AppButton $active aria-label="Chrome"><Ico w={21} vb="0 0 24 24"><path d="M12 12L1.600 6A12 12 0 0 1 22.400 6z" fill="#e33b2e" /><path d="M12 12L22.400 6A12 12 0 0 1 12 24z" fill="#fbc116" /><path d="M12 12v12A12 12 0 0 1 1.600 6z" fill="#239a48" /><path d="M12 6h10.400L12 7z" fill="#e33b2e" /><path d="M17.200 15L12 24l2-8z" fill="#fbc116" /><circle cx="12" cy="12" r="5.800" fill="#fff" /><circle cx="12" cy="12" r="4.500" fill="#3b7ded" /></Ico></AppButton>
        <AppButton aria-label="Spotify"><Ico w={20}><circle cx="10" cy="10" r="10" fill="#1ed760" /><path d="M4 6.800q6.500-1.800 12 1.200M4.500 10.200q5.500-1.500 10 1M5 13.300q4.500-1.200 8.500 .9" stroke="#111" strokeWidth="1.800" strokeLinecap="round" /></Ico></AppButton>
      </Apps>
      <Tray>
        <TrayButton aria-label="Mostra icone nascoste"><Ico w={10} h={7}><path d="M1 6l4-4 4 4" stroke="#333" strokeWidth="1.400" /></Ico></TrayButton>
        <TrayButton aria-label="Sicurezza"><Ico w={14} h={14}><path d="M1 2l6-2 6 2v5q0 4-6 7-6-3-6-7z" fill="#35b2ee" /><path d="M7 0v14q-6-3-6-7h6z" fill="#1480d0" /><circle cx="9.500" cy="9.500" r="4" fill="#17922b" /><path d="M7.500 9.500L9 11l2.500-3" stroke="#fff" /></Ico></TrayButton>
        <TrayButton aria-label="Desktop remoto"><Ico w={14} h={13}><rect x="4" y="0" width="10" height="8" fill="#2f88e0" /><rect x="0" y="4" width="10" height="8" fill="#6cbcf4" /></Ico></TrayButton>
        <TrayButton aria-label="Drive"><Ico w={14} h={14}><path d="M0 0h14v14H0z" fill="#ddd" /><path d="M1 1h3v3H1zM6 0h3v3H6zM11 1h3v3h-3z" fill="#777" /><path d="M4 5h6l3 5v4H1v-4z" fill="#151515" /><path d="M3 11.500h8" stroke="#eee" /></Ico></TrayButton>
        <TrayButton aria-label="Bluetooth"><Ico w={11} h={15}><rect width="11" height="15" rx="5" fill="#0a7cf0" /><path d="M3 5l5 5-2.500 2V3L8 5l-5 5" stroke="#fff" /></Ico></TrayButton>
        <TrayButton aria-label="Blocco"><Ico w={13} h={14}><path d="M3 6V4q0-3 3-3t3 3v2" stroke="#e8357a" strokeWidth="1.600" /><path d="M1 5h10v9H1z" fill="#e8357a" /><path d="M1 13L12 3" stroke="#f5dce0" strokeWidth="1.200" /></Ico></TrayButton>
        <TrayButton aria-label="Rete"><Ico w={14} h={11}><path d="M1 4.500q6-6 12 0M3 6.500q4-4 8 0M5 8.500q2-2 4 0" stroke="#333" /><circle cx="7" cy="9.800" r="1" fill="#333" /></Ico></TrayButton>
        <TrayButton $w={16} aria-label="Volume"><Ico w={15} h={12}><path d="M1 4v4h2l3.500 3V1L3 4zM8.500 4q1.500 2 0 4M10.500 2.500q3 3.500 0 7M12.500 1q4 5 0 10" stroke="#333" /></Ico></TrayButton>
        <Clock>18:10<br />15/09/2025</Clock>
      </Tray>
    </Taskbar>

    <Dialog>
      <DialogTitle><DialogName>Posta elettronica Internet - a</DialogName><Redacted $w={90} $h={19} /><DialogClose type="button" aria-label="Chiudi"><Ico w={10} h={10}><path d="M1 1l8 8M9 1L1 9" stroke="#8a8a8a" /></Ico></DialogClose></DialogTitle>
      <DialogBody>
        <Ico w={26} h={30}>
          <path d="M17 2l8 8-8 8-7-6z" fill="#cfe0f5" stroke="#6f96cc" /><circle cx="16" cy="9" r="5" fill="#2f7fc4" /><path d="M12 7q4-5 6 0-1 4-4 5z" fill="#3f9a4a" />
          <path d="M6 10h4v15l-2 2-2-2z" fill="#e9ab1c" stroke="#94640a" /><circle cx="7" cy="7" r="5.500" fill="#f4c33e" stroke="#94640a" /><circle cx="7" cy="5" r="1.600" fill="#fff" stroke="#94640a" /><path d="M6 17H3v2h3M6 22H3v2h3" stroke="#94640a" fill="#e9ab1c" />
        </Ico>
        <Fields>
          <Intro>Immettere il nome utente e la password per il server seguente.</Intro>
          <Field><Caption>Server</Caption><FieldBox $readonly><HostInput readOnly defaultValue="pop." /><Redacted $w={50} $h={12} /></FieldBox></Field>
          <Field><Caption>Nome utente:</Caption><FieldBox><UserCover /><input size={8} /></FieldBox></Field>
          <Field><Caption>Password:</Caption><FieldBox><input defaultValue="**********" /></FieldBox></Field>
          <Remember><Check type="checkbox" defaultChecked />Salva la password nell'elenco delle password</Remember>
          <DialogButtons><button type="button">OK</button><button type="button">Annulla</button></DialogButtons>
        </Fields>
      </DialogBody>
    </Dialog>
  </Shell>
);

export default App;
